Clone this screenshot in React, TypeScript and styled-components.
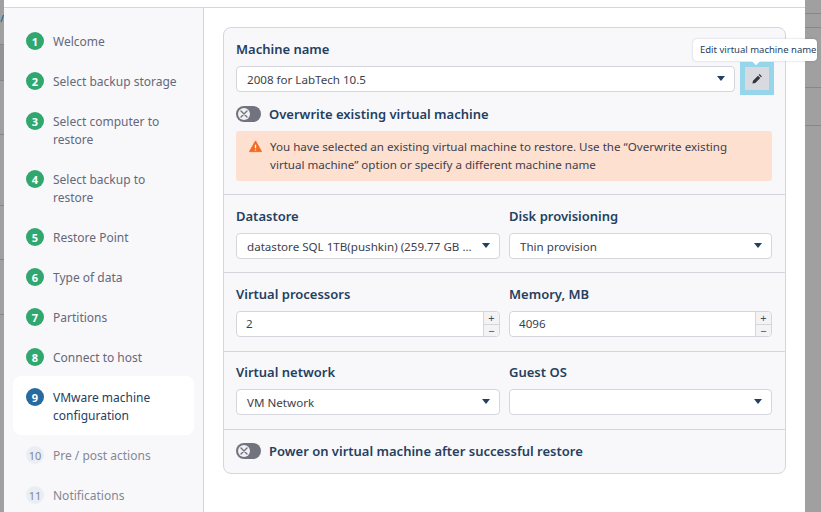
import React from 'react';
import styled, { createGlobalStyle } from 'styled-components';

const Global = createGlobalStyle`
  html, body { margin: 0; padding: 0; width: 821px; height: 512px; overflow: hidden; background: #a0a0a0; }
  * { box-sizing: border-box; }
  body { font-family: "Noto Sans", "Open Sans", sans-serif; font-size: 12px; color: #25405f; }
`;

const Page = styled.div`
  display: flex;
  width: 821px;
  height: 512px;
  overflow: hidden;
`;
const Backdrop = styled.div<{ $w: number }>`
  position: relative;
  width: ${p => p.$w}px;
  flex: none;
  background: #a0a0a0;
`;
const BackLine = styled.div<{ $y: number }>`
  position: absolute;
  left: 0;
  right: 0;
  top: ${p => p.$y}px;
  height: 1px;
  background: #878787;
`;
const BackRow = styled.div`
  position: absolute;
  left: 0;
  right: 0;
  top: 45px;
  height: 35px;
  background: #939397;
`;
const BackMark = styled.svg`
  position: absolute;
  left: 0;
  top: 15px;
`;
const Modal = styled.div`
  position: relative;
  z-index: 1;
  width: 801px;
  flex: none;
  background: #fff;
  display: flex;
  flex-direction: column;
`;
const Header = styled.div`
  height: 8px;
  flex: none;
  background: #fff;
  border-bottom: 1px solid #d5d5de;
`;
const Body = styled.div`
  flex: 1;
  display: flex;
  min-height: 0;
`;
const Sidebar = styled.div`
  width: 200px;
  flex: none;
  background: #f8f8fb;
  border-right: 1px solid #d5d5de;
  padding: 15px 9px 0;
  display: flex;
  flex-direction: column;
  gap: 2px;
`;
const Step = styled.div<{ $active?: boolean }>`
  display: flex;
  gap: 9px;
  padding: ${p => (p.$active ? '13px 10px 10px 13px' : '10px 10px 10px 13px')};
  margin-top: ${p => (p.$active ? '-3px' : '0')};
  border-radius: 8px;
  background: ${p => (p.$active ? '#fff' : 'transparent')};
`;
const StepNum = styled.div<{ $state: 'done' | 'active' | 'todo' }>`
  width: 18px;
  height: 18px;
  margin-top: -1px;
  flex: none;
  border-radius: 50%;
  display: flex;
  align-items: center;
  justify-content: center;
  font-size: 11px;
  font-weight: ${p => (p.$state === 'todo' ? 400 : 700)};
  color: ${p => (p.$state === 'todo' ? '#82858f' : '#fff')};
  background: ${p =>
    p.$state === 'done' ? '#30a76f' : p.$state === 'active' ? '#276a9f' : '#e9eef5'};
`;
const StepLabel = styled.div<{ $state: 'done' | 'active' | 'todo' }>`
  font-size: 12px;
  line-height: 18px;
  color: ${p =>
    p.$state === 'done' ? '#65687a' : p.$state === 'active' ? '#25405f' : '#858793'};
`;
const Content = styled.div`
  flex: 1;
  padding: 19px 19px 0 19px;
`;
const Card = styled.div`
  width: 563px;
  background: #f8f8fb;
  border: 1px solid #d5d5de;
  border-radius: 8px;
`;
const Section = styled.div`
  padding: 12px 13px 13px 12px;
  border-bottom: 1px solid #d5d5de;
  &:last-child { border-bottom: none; }
`;
const NumberSection = styled(Section)`
  padding-bottom: 14px;
`;
const NetworkSection = styled(Section)`
  padding-top: 11px;
  padding-bottom: 14px;
`;
const FieldRow = styled.div`
  display: grid;
  grid-template-columns: 264px 263px;
  gap: 9px;
`;
const Field = styled.div`
  display: flex;
  flex-direction: column;
  gap: 8px;
  min-width: 0;
`;
const Label = styled.div`
  font-size: 13px;
  line-height: 18px;
  font-weight: 600;
  color: #25405f;
`;
const NameRow = styled.div`
  display: flex;
  align-items: flex-start;
  gap: 10px;
`;
const Select = styled.div`
  height: 26px;
  background: #fff;
  border: 1px solid #d5d5de;
  border-radius: 4px;
  padding: 0 28px 0 10px;
  position: relative;
  display: flex;
  align-items: center;
  font-size: 11.6px;
  color: #3c3f4c;
  white-space: nowrap;
  overflow: hidden;
  &::after {
    content: '';
    position: absolute;
    right: 9px;
    top: 9px;
    border-left: 4px solid transparent;
    border-right: 4px solid transparent;
    border-top: 5px solid #25405f;
  }
`;
const NameSelect = styled(Select)`
  flex: 1;
  min-width: 0;
`;
const EditButton = styled.div`
  position: relative;
  width: 24px;
  height: 23px;
  margin: 1px 3px 0 0;
  flex: none;
  background: #d9d9e0;
  box-shadow: 0 0 0 5px #96d6ea;
  display: flex;
  align-items: center;
  justify-content: center;
`;
const Tooltip = styled.div`
  position: absolute;
  left: -52px;
  top: -28px;
  height: 22px;
  width: 124px;
  padding-left: 7px;
  background: #fff;
  border-radius: 4px;
  box-shadow: 0 0 2px rgba(60, 60, 80, 0.3);
  font-size: 9.5px;
  line-height: 21px;
  color: #25405f;
  white-space: nowrap;
  &::after {
    content: '';
    position: absolute;
    left: 60px;
    bottom: -3px;
    width: 6px;
    height: 6px;
    background: #fff;
    transform: rotate(45deg);
  }
`;
const ToggleRow = styled.div`
  display: flex;
  align-items: center;
  gap: 8px;
  height: 18px;
`;
const SpacedToggleRow = styled(ToggleRow)`
  margin-top: 13px;
`;
const ToggleTrack = styled.div`
  width: 25px;
  height: 16px;
  border-radius: 8px;
  background: #71747f;
  padding: 2px;
  flex: none;
  display: flex;
`;
const ToggleKnob = styled.div`
  width: 12px;
  height: 12px;
  border-radius: 50%;
  background: #f1f1f4;
  display: flex;
  align-items: center;
  justify-content: center;
`;
const ToggleLabel = styled.div`
  font-size: 13px;
  font-weight: 600;
  color: #25405f;
  white-space: nowrap;
`;
const Alert = styled.div`
  margin-top: 8px;
  background: #fde0d0;
  border-radius: 3px;
  padding: 7px 34px 6px 13px;
  display: flex;
  gap: 8px;
  font-size: 11.6px;
  line-height: 18px;
  color: #3e404d;
  height: 50px;
`;
const AlertIcon = styled.svg`
  width: 13px;
  height: 13px;
  flex: none;
  margin-top: 2px;
`;
const NumberBox = styled.div`
  height: 26px;
  background: #fff;
  border: 1px solid #d5d5de;
  border-radius: 4px;
  display: flex;
`;
const NumberValue = styled.div`
  flex: 1;
  padding-left: 9px;
  font-size: 11.6px;
  line-height: 24px;
  color: #3c3f4c;
`;
const Spin = styled.div`
  width: 16px;
  flex: none;
  border-left: 1px solid #d5d5de;
  background: #f3f3f6;
  border-radius: 0 3px 3px 0;
  display: grid;
  grid-template-rows: 1fr 1fr;
`;
const SpinPart = styled.div`
  display: flex;
  align-items: center;
  justify-content: center;
  font-size: 11px;
  line-height: 10px;
  height: 12px;
  color: #4a4d5a;
  & + & { border-top: 1px solid #d5d5de; }
`;

type StepState = 'done' | 'active' | 'todo';
const steps: { n: number; label: string; state: StepState }[] = [
  { n: 1, label: 'Welcome', state: 'done' },
  { n: 2, label: 'Select backup storage', state: 'done' },
  { n: 3, label: 'Select computer to restore', state: 'done' },
  { n: 4, label: 'Select backup to restore', state: 'done' },
  { n: 5, label: 'Restore Point', state: 'done' },
  { n: 6, label: 'Type of data', state: 'done' },
  { n: 7, label: 'Partitions', state: 'done' },
  { n: 8, label: 'Connect to host', state: 'done' },
  { n: 9, label: 'VMware machine configuration', state: 'active' },
  { n: 10, label: 'Pre / post actions', state: 'todo' },
  { n: 11, label: 'Notifications', state: 'todo' },
];

const Toggle = () => (
  <ToggleTrack>
    <ToggleKnob>
      <svg width="8" height="8" viewBox="0 0 8 8">
        <path d="M1 1l6 6M7 1L1 7" stroke="#71747f" strokeWidth="1.4" strokeLinecap="round" />
      </svg>
    </ToggleKnob>
  </ToggleTrack>
);

const Numeric = ({ value }: { value: string }) => (
  <NumberBox>
    <NumberValue>{value}</NumberValue>
    <Spin>
      <SpinPart>+</SpinPart>
      <SpinPart>−</SpinPart>
    </Spin>
  </NumberBox>
);

export default function App() {
  return (
    <Page>
      <Global />
      <Backdrop $w={4}>
        <BackMark width="4" height="8" viewBox="0 0 4 8">
          <path d="M3.5 0L1 7" stroke="#2c6ca3" strokeWidth="1.2" />
        </BackMark>
        <BackRow />
        {[44, 80, 134, 205, 259, 314].map(y => <BackLine key={y} $y={y} />)}
      </Backdrop>
      <Modal>
        <Header />
        <Body>
          <Sidebar>
            {steps.map(s => (
              <Step key={s.n} $active={s.state === 'active'}>
                <StepNum $state={s.state}>{s.n}</StepNum>
                <StepLabel $state={s.state}>{s.label}</StepLabel>
              </Step>
            ))}
          </Sidebar>
          <Content>
            <Card>
              <Section>
                <Field>
                  <Label>Machine name</Label>
                  <NameRow>
                    <NameSelect>2008 for LabTech 10.5</NameSelect>
                    <EditButton>
                      <svg width="11" height="11" viewBox="0 0 11 11">
                        <path d="M7.6 1.1l2.3 2.3-.9.9-2.3-2.3zM6 2.7L8.3 5l-5 5-2.9.6.6-2.9z" fill="#33343c" />
                      </svg>
                      <Tooltip>Edit virtual machine name</Tooltip>
                    </EditButton>
                  </NameRow>
                </Field>
                <SpacedToggleRow>
                  <Toggle />
                  <ToggleLabel>Overwrite existing virtual machine</ToggleLabel>
                </SpacedToggleRow>
                <Alert>
                  <AlertIcon viewBox="0 0 14 14">
                    <path d="M7 1L13.5 12.5H.5z" fill="#f26b21" stroke="#f26b21" strokeLinejoin="round" />
                    <path d="M7 5v4M7 10.2v1.2" stroke="#fff" strokeWidth="1.4" />
                  </AlertIcon>
                  <div>
                    You have selected an existing virtual machine to restore. Use the “Overwrite existing virtual machine” option or specify a different machine name
                  </div>
                </Alert>
              </Section>
              <Section>
                <FieldRow>
                  <Field>
                    <Label>Datastore</Label>
                    <Select>datastore SQL 1TB(pushkin) (259.77 GB ...</Select>
                  </Field>
                  <Field>
                    <Label>Disk provisioning</Label>
                    <Select>Thin provision</Select>
                  </Field>
                </FieldRow>
              </Section>
              <NumberSection>
                <FieldRow>
                  <Field>
                    <Label>Virtual processors</Label>
                    <Numeric value="2" />
                  </Field>
                  <Field>
                    <Label>Memory, MB</Label>
                    <Numeric value="4096" />
                  </Field>
                </FieldRow>
              </NumberSection>
              <NetworkSection>
                <FieldRow>
                  <Field>
                    <Label>Virtual network</Label>
                    <Select>VM Network</Select>
                  </Field>
                  <Field>
                    <Label>Guest OS</Label>
                    <Select />
                  </Field>
                </FieldRow>
              </NetworkSection>
              <Section>
                <ToggleRow>
                  <Toggle />
                  <ToggleLabel>Power on virtual machine after successful restore</ToggleLabel>
                </ToggleRow>
              </Section>
            </Card>
          </Content>
        </Body>
      </Modal>
      <Backdrop $w={16}>
        {[13, 27, 87, 125].map(y => <BackLine key={y} $y={y} />)}
      </Backdrop>
    </Page>
  );
}
